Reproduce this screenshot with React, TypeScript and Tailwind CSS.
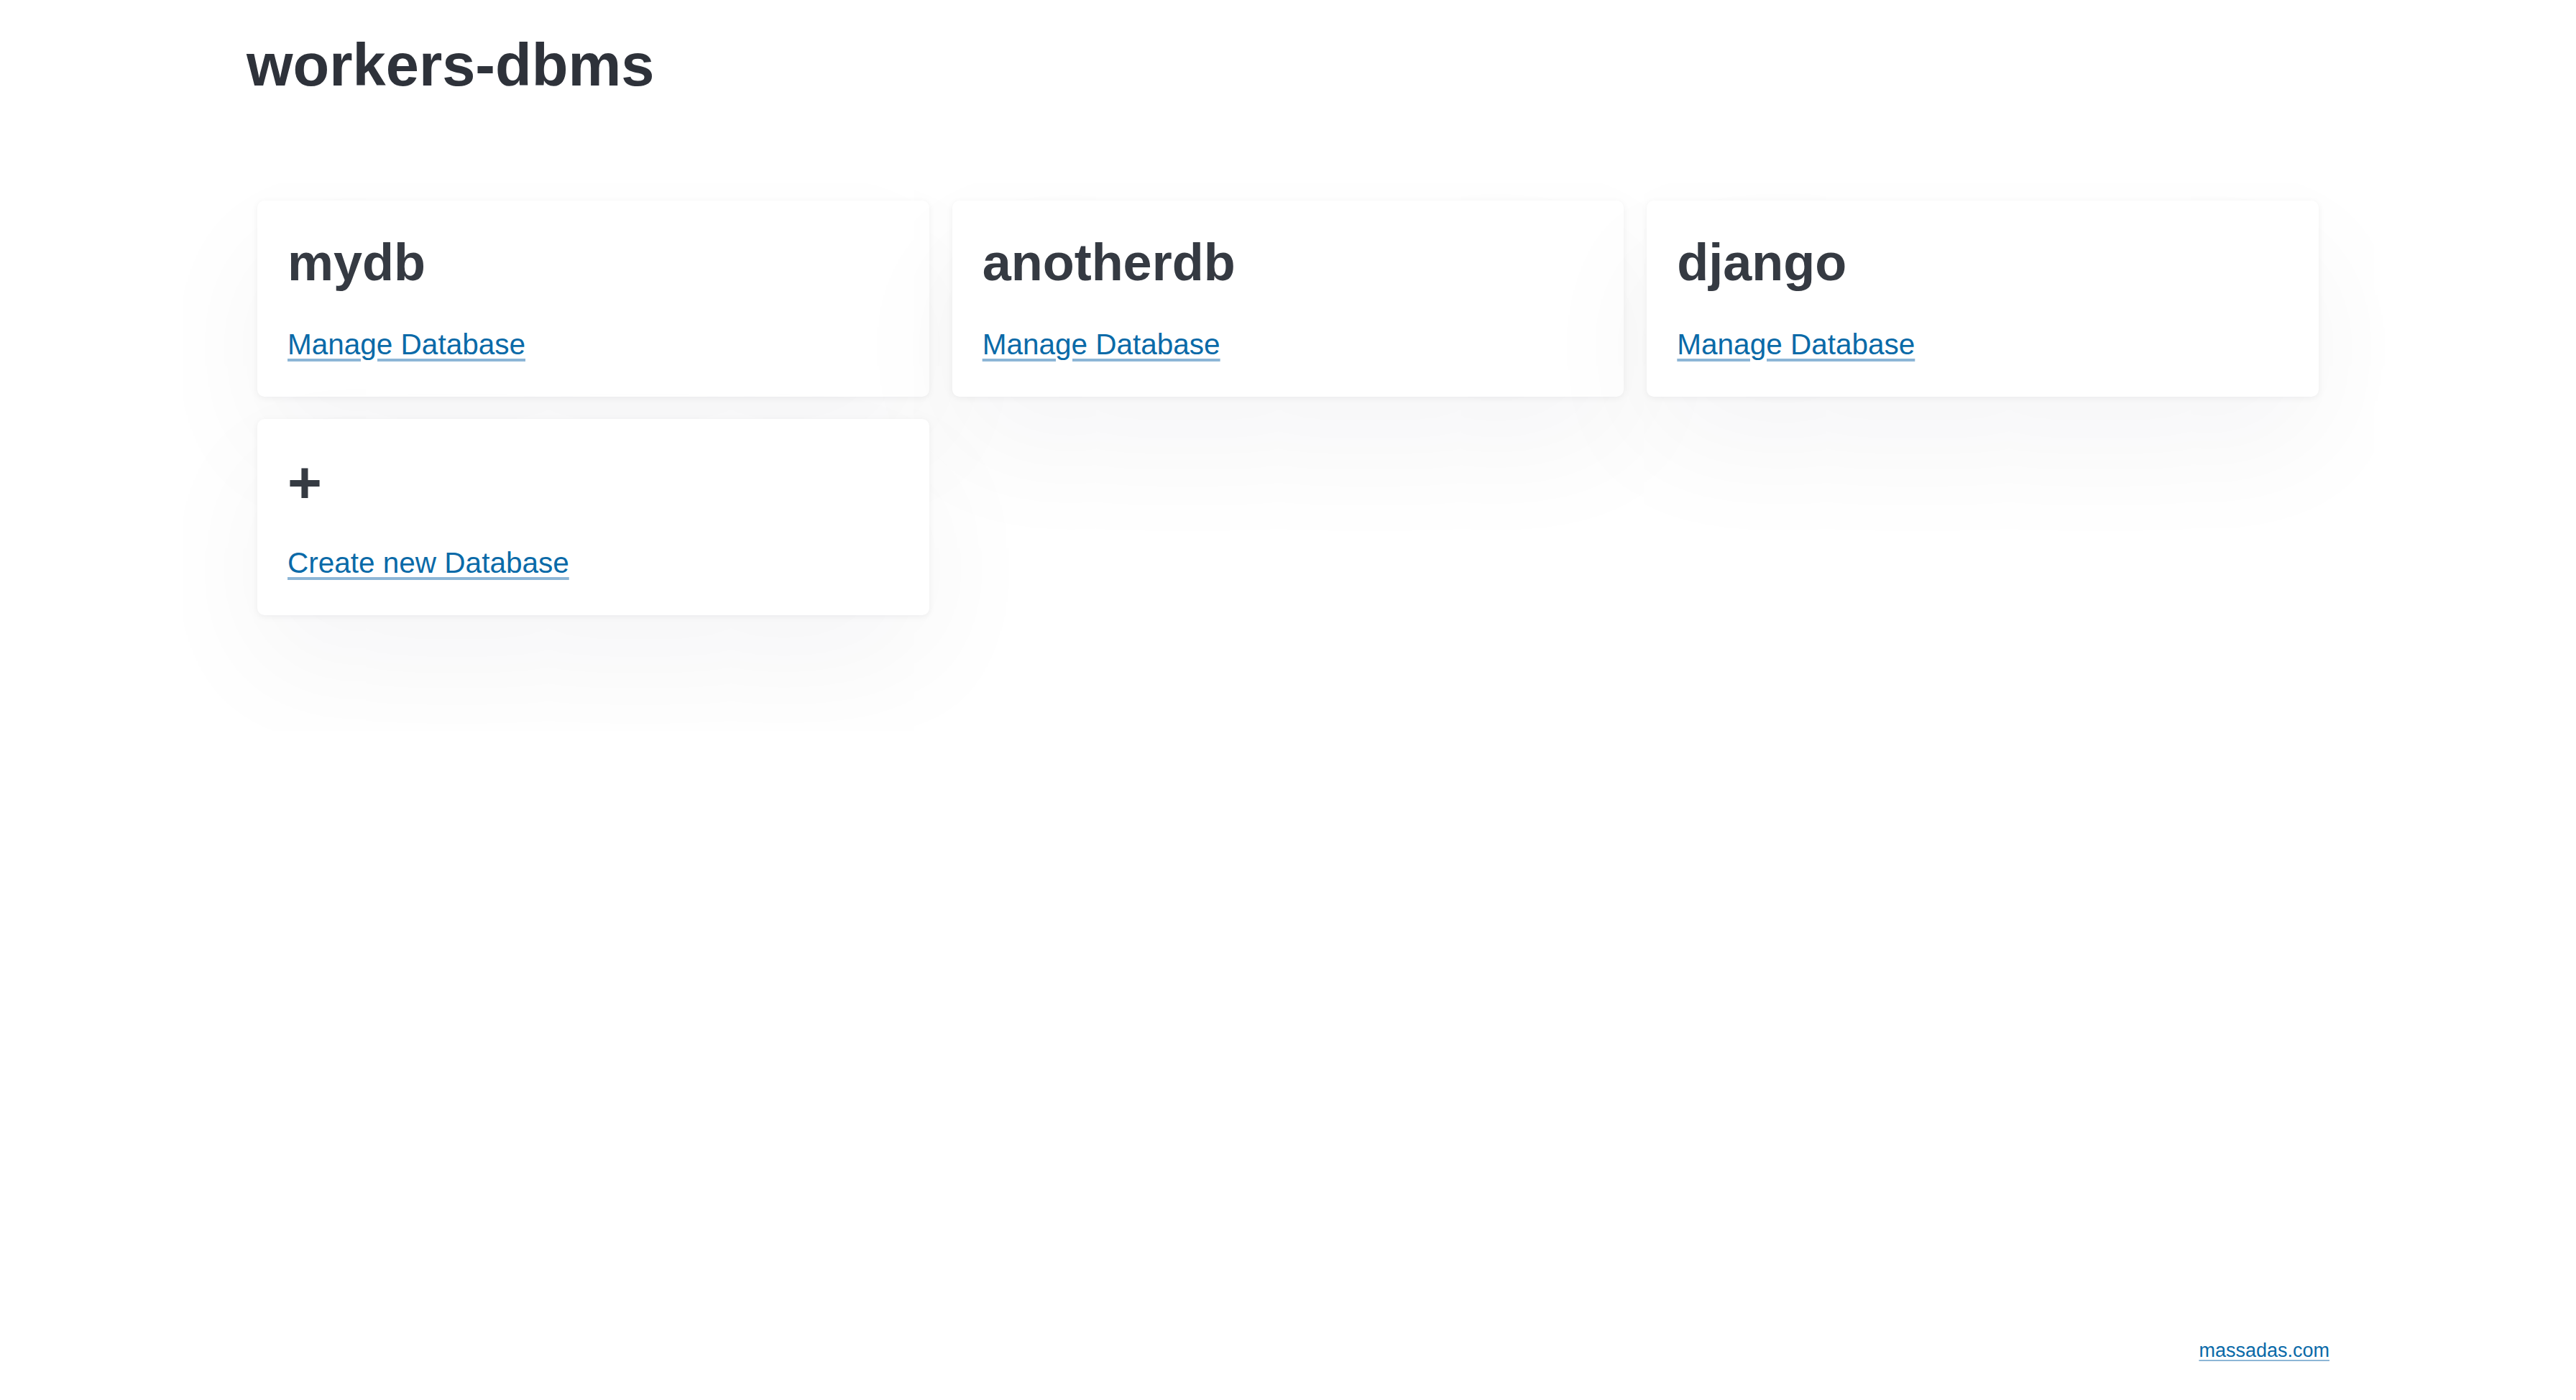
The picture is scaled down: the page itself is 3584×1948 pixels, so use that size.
const databases = ['mydb', 'anotherdb', 'django'];

const cardClass =
  'bg-white rounded-[10px] pt-[43px] pb-[49px] px-[42px] flex flex-col gap-[47px] shadow-[0_2px_10px_rgba(15,23,42,0.06),0_70px_180px_rgba(15,23,42,0.045)]';

const linkClass =
  'text-[40.5px] leading-[48px] text-[#0a6aa8] underline decoration-[#8db6d6] decoration-[4px] underline-offset-[6px] w-fit';

const App = () => {
  return (
    <div className="min-h-screen bg-white flex flex-col font-['Liberation_Sans',Arial,sans-serif]">
      <div className="w-[2898px] mx-auto flex-1 flex flex-col">
        {/* Header */}
        <h1 className="pt-[41px] text-[83px] leading-[100px] font-bold text-[#2e323a]">
          workers-dbms
        </h1>

        {/* Database cards */}
        <div className="mt-[138px] px-[15px] grid grid-cols-3 gap-x-[32px] gap-y-[31px]">
          {databases.map((db) => (
            <div key={db} className={cardClass}>
              <h2 className="text-[72px] leading-[86px] font-bold text-[#353a42]">{db}</h2>
              <a href="#" className={linkClass}>
                Manage Database
              </a>
            </div>
          ))}
          <div className={cardClass}>
            <h2 className="text-[82px] leading-[86px] font-bold text-[#353a42] translate-y-[2px]">+</h2>
            <a href="#" className={linkClass}>
              Create new Database
            </a>
          </div>
        </div>

        {/* Footer */}
        <div className="mt-auto pb-[53px] flex justify-end">
          <a
            href="#"
            className="text-[27px] leading-[32px] text-[#0a6aa8] underline decoration-[#8db6d6] decoration-[2px] underline-offset-[4px]"
          >
            massadas.com
          </a>
        </div>
      </div>
    </div>
  );
};

export default App;
